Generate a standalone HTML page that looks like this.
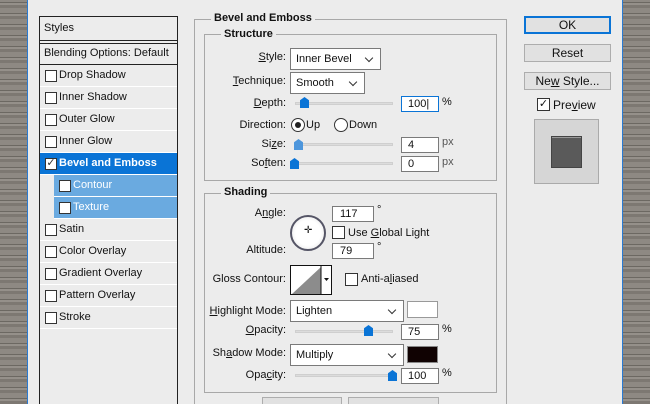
<!DOCTYPE html><html><head><style>
*{margin:0;padding:0;box-sizing:border-box}
html,body{width:650px;height:404px;overflow:hidden}
body{position:relative;font-family:"Liberation Sans",sans-serif;font-size:11px;color:#111;background:#85807a}
.a{position:absolute}
.wood{background:repeating-linear-gradient(0deg,#7d7872 0 3px,#95908a 3px 5px,#6c6862 5px 6px,#8e8983 6px 11px),#85807a}
.dlg{left:27px;top:0;width:596px;height:404px;background:#ececec;border-left:1px solid #2a7bd3;border-right:1px solid #2a7bd3;overflow:hidden}
.list{left:39px;top:16px;width:139px;height:400px;border:1px solid #222;background:#ececec}
.row{position:absolute;left:0;width:137px;height:22px;border-bottom:1px solid #fff;line-height:21px;padding-left:19px}
.cb{position:absolute;width:12px;height:12px;border:1px solid #333;background:#fff}
.row .cb{left:5px;top:5px}
.box{position:absolute;border:1px solid #a8a8a8}
.t{position:absolute;background:#ececec;padding:0 3px;font-weight:bold}
.lbl{position:absolute;text-align:right;width:90px;left:196px}
.sel{position:absolute;background:#fff;border:1px solid #7a7a7a;height:22px;line-height:21px;padding-left:5px}
.sel:after{content:"";position:absolute;right:8px;top:6px;width:5px;height:5px;border-right:1px solid #333;border-bottom:1px solid #333;transform:rotate(45deg)}
.inp{position:absolute;background:#fff;border:1px solid #7a7a7a;height:16px;line-height:15px;padding-left:6px;width:38px;left:401px}
.tr{position:absolute;height:3px;background:#dcdcdc;border:1px solid #cfcfcf;left:295px;width:98px}
.th{position:absolute;width:9px;height:11px;background:#0a74d6;clip-path:polygon(50% 0,100% 30%,100% 100%,0 100%,0 30%)}
.btn{position:absolute;left:524px;width:87px;height:18px;border:1px solid #adadad;background:#e1e1e1;text-align:center;line-height:16px;font-size:12px}
u{text-decoration:underline}
</style></head><body>
<div class="a wood" style="left:0;top:0;width:27px;height:404px"></div>
<div class="a wood" style="left:623px;top:0;width:27px;height:404px"></div>
<div class="a dlg"></div>
<div class="a" style="left:28px;top:0;width:594px;height:404px;overflow:hidden">
<div style="position:absolute;left:-28px;top:0;width:650px;height:404px">
<div class="a list">
<div class="row" style="top:0;height:24px;padding-left:4px;border-bottom:1px solid #222;line-height:22px">Styles</div>
<div class="row" style="top:26px;height:22px;padding-left:4px;border-top:1px solid #222;border-bottom:1px solid #222;line-height:19px">Blending Options: Default</div>
<div class="row" style="top:48px"><span class="cb"></span>Drop Shadow</div>
<div class="row" style="top:70px"><span class="cb"></span>Inner Shadow</div>
<div class="row" style="top:92px"><span class="cb"></span>Outer Glow</div>
<div class="row" style="top:114px"><span class="cb"></span>Inner Glow</div>
<div class="row" style="top:136px;background:#0a74d6;color:#fff;font-weight:bold"><span class="cb" style="font-size:11px;line-height:9px;color:#333;text-align:center;font-weight:normal">✓</span>Bevel and Emboss</div>
<div class="row" style="top:158px;left:14px;width:123px;background:#6aaae0;color:#fff"><span class="cb"></span>Contour</div>
<div class="row" style="top:180px;left:14px;width:123px;background:#6aaae0;color:#fff"><span class="cb"></span>Texture</div>
<div class="row" style="top:202px"><span class="cb"></span>Satin</div>
<div class="row" style="top:224px"><span class="cb"></span>Color Overlay</div>
<div class="row" style="top:246px"><span class="cb"></span>Gradient Overlay</div>
<div class="row" style="top:268px"><span class="cb"></span>Pattern Overlay</div>
<div class="row" style="top:290px"><span class="cb"></span>Stroke</div>
</div>

<div class="box" style="left:194px;top:19px;width:313px;height:400px"></div>
<div class="t" style="left:211px;top:12px">Bevel and Emboss</div>
<div class="box" style="left:204px;top:34px;width:293px;height:147px"></div>
<div class="t" style="left:221px;top:28px">Structure</div>

<div class="lbl" style="top:51px"><u>S</u>tyle:</div>
<div class="sel" style="left:290px;top:48px;width:91px">Inner Bevel</div>
<div class="lbl" style="top:75px"><u>T</u>echnique:</div>
<div class="sel" style="left:290px;top:72px;width:75px">Smooth</div>
<div class="lbl" style="top:97px"><u>D</u>epth:</div>
<div class="tr" style="top:102px"></div><div class="th" style="left:300px;top:97px"></div>
<div class="inp" style="top:96px;border-color:#0a74d6">100|</div><div class="a" style="left:442px;top:96px">%</div>
<div class="lbl" style="top:119px">Direction:</div>
<div class="a" style="left:291px;top:118px;width:14px;height:14px;border:1px solid #333;border-radius:50%;background:#fff"><div class="a" style="left:3px;top:3px;width:6px;height:6px;border-radius:50%;background:#222"></div></div>
<div class="a" style="left:306px;top:119px">Up</div>
<div class="a" style="left:334px;top:118px;width:14px;height:14px;border:1px solid #333;border-radius:50%;background:#fff"></div>
<div class="a" style="left:349px;top:119px">Down</div>
<div class="lbl" style="top:138px">Si<u>z</u>e:</div>
<div class="tr" style="top:143px"></div><div class="th" style="left:294px;top:139px;background:#4d96dc"></div>
<div class="inp" style="top:137px">4</div><div class="a" style="left:442px;top:136px;color:#555">px</div>
<div class="lbl" style="top:157px">So<u>f</u>ten:</div>
<div class="tr" style="top:162px"></div><div class="th" style="left:290px;top:158px"></div>
<div class="inp" style="top:156px">0</div><div class="a" style="left:442px;top:156px;color:#555">px</div>

<div class="box" style="left:204px;top:193px;width:293px;height:200px"></div>
<div class="t" style="left:221px;top:186px">Shading</div>
<div class="lbl" style="top:207px">A<u>n</u>gle:</div>
<div class="a" style="left:290px;top:215px;width:36px;height:36px;border:2px solid #556;border-radius:50%;background:radial-gradient(#fff 55%,#ddd)"></div>
<div class="a" style="left:304px;top:225px;font-size:10px">✛</div>
<div class="a" style="left:332px;top:206px;width:42px;height:16px;border:1px solid #7a7a7a;background:#fff;padding-left:7px;line-height:15px">117</div>
<div class="a" style="left:377px;top:204px">°</div>
<div class="cb" style="left:332px;top:226px;width:13px;height:13px"></div>
<div class="a" style="left:348px;top:227px">Use <u>G</u>lobal Light</div>
<div class="lbl" style="top:244px">Altitude:</div>
<div class="a" style="left:332px;top:243px;width:42px;height:16px;border:1px solid #7a7a7a;background:#fff;padding-left:7px;line-height:15px">79</div>
<div class="a" style="left:377px;top:241px">°</div>
<div class="lbl" style="top:273px">Gloss Contour:</div>
<div class="a" style="left:290px;top:265px;width:42px;height:30px;border:1px solid #111;background:#fff">
<svg width="40" height="28" style="position:absolute;left:0;top:0"><polygon points="1,28 30,1 30,28" fill="#8c8c8c"/><line x1="30" y1="0" x2="30" y2="28" stroke="#111"/><polygon points="33,12 38,12 35.5,15" fill="#111"/></svg></div>
<div class="cb" style="left:345px;top:273px;width:13px;height:13px"></div>
<div class="a" style="left:361px;top:273px">Anti-a<u>l</u>iased</div>
<div class="lbl" style="top:305px"><u>H</u>ighlight Mode:</div>
<div class="sel" style="left:290px;top:300px;width:114px">Lighten</div>
<div class="a" style="left:407px;top:301px;width:31px;height:17px;border:1px solid #999;background:#fff"></div>
<div class="lbl" style="top:324px"><u>O</u>pacity:</div>
<div class="tr" style="top:330px"></div><div class="th" style="left:364px;top:325px"></div>
<div class="inp" style="top:324px">75</div><div class="a" style="left:442px;top:323px">%</div>
<div class="lbl" style="top:347px">Sh<u>a</u>dow Mode:</div>
<div class="sel" style="left:290px;top:344px;width:114px">Multiply</div>
<div class="a" style="left:407px;top:346px;width:31px;height:17px;border:1px solid #888;background:#100202"></div>
<div class="lbl" style="top:369px">Opa<u>c</u>ity:</div>
<div class="tr" style="top:374px"></div><div class="th" style="left:388px;top:370px"></div>
<div class="inp" style="top:368px">100</div><div class="a" style="left:442px;top:367px">%</div>

<div class="a" style="left:262px;top:397px;width:80px;height:20px;border:1px solid #adadad;background:#e1e1e1"></div>
<div class="a" style="left:348px;top:397px;width:91px;height:20px;border:1px solid #adadad;background:#e1e1e1"></div>

<div class="btn" style="top:16px;border:2px solid #0a74d6;line-height:14px">OK</div>
<div class="btn" style="top:44px">Reset</div>
<div class="btn" style="top:72px">Ne<u>w</u> Style...</div>
<div class="cb" style="left:537px;top:98px;width:13px;height:13px;font-size:11px;line-height:10px;text-align:center">✓</div>
<div class="a" style="left:553px;top:98px;font-size:12px">Pre<u>v</u>iew</div>
<div class="a" style="left:534px;top:119px;width:65px;height:65px;border:1px solid #aaa;background:#d6d6d6"></div>
<div class="a" style="left:551px;top:136px;width:31px;height:32px;background:#5a5a5a;border:1px solid #444;box-shadow:inset 0 1px 0 #999"></div>
</div></div>
</body></html>
